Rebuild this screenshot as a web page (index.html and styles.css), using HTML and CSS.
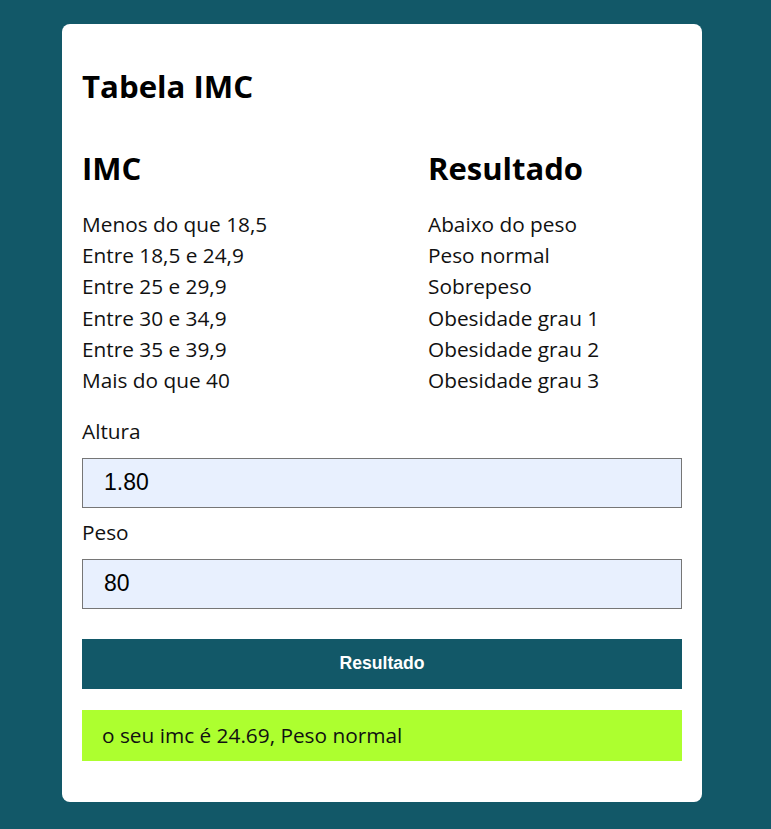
FILE: index.html
```html
<!DOCTYPE html>
<html lang="pt">
<head>
<meta charset="utf-8">
<title>Tabela IMC</title>
<link rel="stylesheet" href="styles.css">
</head>
<body>
<main class="card">
  <h1 class="title">Tabela IMC</h1>
  <section class="table">
    <div class="col">
      <h2 class="col-head">IMC</h2>
      <ul class="col-list">
        <li>Menos do que 18,5</li>
        <li>Entre 18,5 e 24,9</li>
        <li>Entre 25 e 29,9</li>
        <li>Entre 30 e 34,9</li>
        <li>Entre 35 e 39,9</li>
        <li>Mais do que 40</li>
      </ul>
    </div>
    <div class="col">
      <h2 class="col-head">Resultado</h2>
      <ul class="col-list">
        <li>Abaixo do peso</li>
        <li>Peso normal</li>
        <li>Sobrepeso</li>
        <li>Obesidade grau 1</li>
        <li>Obesidade grau 2</li>
        <li>Obesidade grau 3</li>
      </ul>
    </div>
  </section>
  <form class="form">
    <label class="label" for="altura">Altura</label>
    <input class="field" id="altura" type="text" value="1.80">
    <label class="label label-second" for="peso">Peso</label>
    <input class="field" id="peso" type="text" value="80">
    <button class="btn" type="button">Resultado</button>
  </form>
  <div class="result">o seu imc é 24.69, Peso normal</div>
</main>
</body>
</html>
```

FILE: styles.css
```css
* { box-sizing: border-box; }
html, body { margin: 0; padding: 0; }
body {
  background: #125868;
  font-family: "Open Sans", "Liberation Sans", sans-serif;
  color: #111;
  min-height: 829px;
  padding-top: 24px;
}
.card {
  width: 640px;
  margin: 0 0 0 62px;
  background: #fff;
  border-radius: 8px;
  padding: 20px 20px 41px;
}
.title {
  margin: 20px 0 0;
  font-size: 31.2px;
  line-height: 44px;
  font-weight: 700;
  color: #000;
}
.table {
  display: grid;
  grid-template-columns: 346px 1fr;
  margin-top: 38px;
}
.col-head {
  margin: 0 0 19px;
  font-size: 31px;
  line-height: 44px;
  font-weight: 700;
  color: #000;
}
.col-list {
  list-style: none;
  margin: 0;
  padding: 0;
  font-size: 20.8px;
  line-height: 31.2px;
}
.form {
  display: flex;
  flex-direction: column;
  margin-top: 22px;
}
.label {
  font-size: 20.8px;
  line-height: 27px;
  margin-bottom: 12.5px;
}
.label-second { margin-top: 11.5px; }
.field {
  height: 50px;
  width: 100%;
  border: 1px solid #767676;
  background: #e8f0fe;
  font-family: "Liberation Sans", Arial, sans-serif;
  font-size: 23px;
  color: #000;
  padding: 0 21px;
  margin: 0;
  outline: none;
}
.btn {
  margin-top: 30px;
  height: 50px;
  width: 100%;
  border: none;
  background: #125868;
  color: #fff;
  font-family: "Liberation Sans", Arial, sans-serif;
  font-weight: 700;
  font-size: 17.6px;
  cursor: pointer;
}
.result {
  margin-top: 21px;
  height: 51px;
  background: #adff2f;
  font-size: 20.8px;
  line-height: 51px;
  padding: 0 20px;
}
```
